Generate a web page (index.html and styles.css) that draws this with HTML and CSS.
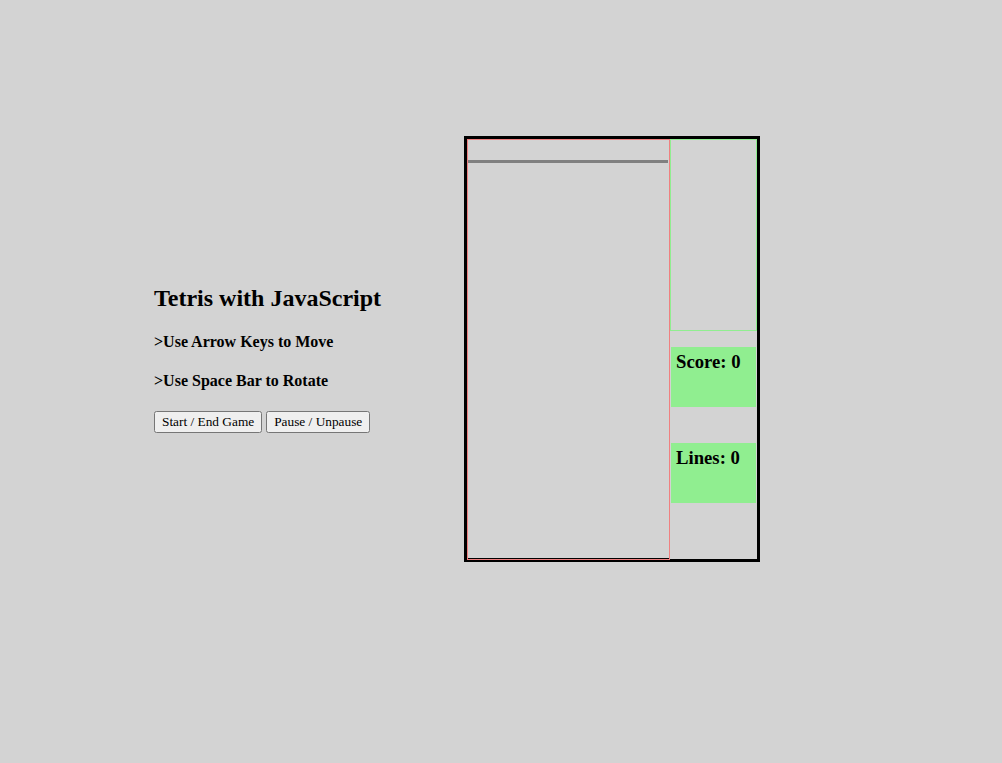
FILE: index.html
```html
<!DOCTYPE html>
<html lang="en">
<head>
<meta charset="utf-8">
<title>Tetris with JavaScript</title>
<link rel="stylesheet" href="styles.css">
</head>
<body>
<main class="page">
  <section class="info">
    <h2 class="title">Tetris with JavaScript</h2>
    <h4 class="hint">&gt;Use Arrow Keys to Move</h4>
    <h4 class="hint">&gt;Use Space Bar to Rotate</h4>
    <div class="controls">
      <button class="btn" type="button">Start / End Game</button>
      <button class="btn" type="button">Pause / Unpause</button>
    </div>
  </section>
  <section class="game">
    <div class="board">
      <div class="spawn-line"></div>
      <div class="floor"></div>
    </div>
    <div class="side">
      <div class="next"></div>
      <div class="stat stat-score"><h3 class="stat-text">Score: 0</h3></div>
      <div class="stat stat-lines"><h3 class="stat-text">Lines: 0</h3></div>
    </div>
  </section>
</main>
</body>
</html>
```

FILE: styles.css
```css
html, body {
  margin: 0;
  padding: 0;
}

body {
  background: #d3d3d3;
  font-family: "Liberation Serif", "Times New Roman", serif;
  color: #000;
}

.page {
  display: flex;
  align-items: flex-start;
  padding: 136px 0 0 154px;
}

.info {
  width: 310px;
  flex: none;
  padding-top: 148px;
  display: flex;
  flex-direction: column;
  gap: 21px;
}

.title {
  margin: 0;
  font-size: 24px;
  line-height: 28px;
  font-weight: bold;
}

.hint {
  margin: 0;
  font-size: 16px;
  line-height: 18px;
  font-weight: bold;
}

.controls {
  display: flex;
  gap: 4px;
}

.btn {
  font-family: "Liberation Serif", "Times New Roman", serif;
  font-size: 13.333px;
}

.game {
  flex: none;
  display: flex;
  width: 290px;
  height: 420px;
  border: 3px solid #000;
}

.board {
  flex: none;
  box-sizing: border-box;
  width: 203px;
  height: 421px;
  border: 1px solid #f08080;
  display: flex;
  flex-direction: column;
}

.spawn-line {
  width: 200px;
  height: 3px;
  margin-top: 20px;
  background: #808080;
}

.floor {
  margin-top: auto;
  height: 1px;
  background: #000;
}

.side {
  flex: none;
  width: 87px;
  display: flex;
  flex-direction: column;
}

.next {
  box-sizing: border-box;
  width: 87px;
  height: 192px;
  border: 1px solid #90ee90;
}

.stat {
  box-sizing: border-box;
  width: 85px;
  height: 60px;
  margin-left: 1px;
  padding: 4px 5px;
  background: #90ee90;
}

.stat-score {
  margin-top: 16px;
}

.stat-lines {
  margin-top: 36px;
}

.stat-text {
  margin: 0;
  font-size: 18.72px;
  font-weight: bold;
}
```
